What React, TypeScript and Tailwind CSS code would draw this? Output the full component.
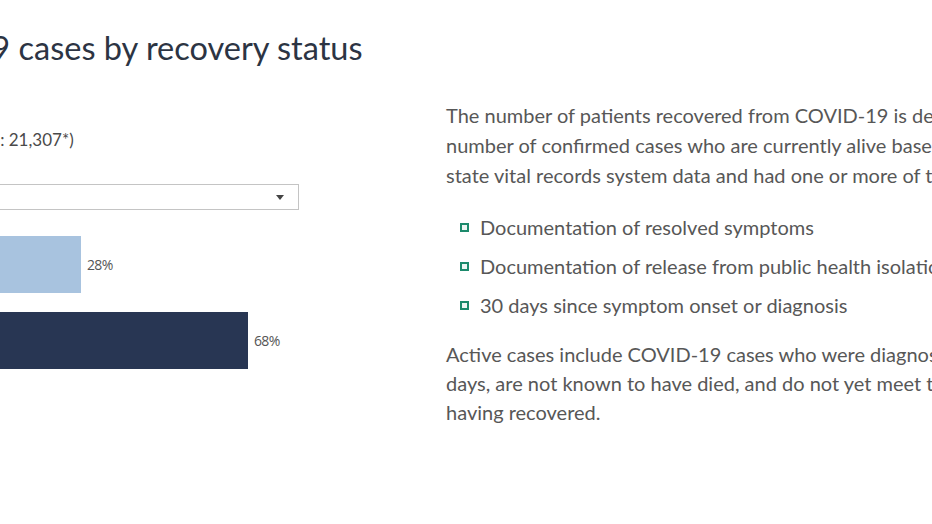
import React from "react";

const bars = [
  { label: "Active", pct: 28, color: "bg-[#a8c3df]" },
  { label: "Recovered", pct: 68, color: "bg-[#283653]" },
];

export default function App() {
  return (
    <div
      className="w-[932px] h-[524px] overflow-hidden bg-white relative"
      style={{ fontFamily: "Lato, 'Open Sans', sans-serif" }}
    >
      <div className="flex">
        {/* Left column: chart */}
        <div className="ml-[-140px] w-[586px] shrink-0">
          <h2 className="mt-[29px] ml-[-2px] text-[32.5px] leading-[38px] text-[#2c3443] font-normal whitespace-nowrap">
            COVID-19 cases by recovery status
          </h2>
          <p className="mt-[63px] ml-[55px] text-[17px] leading-[20px] text-[#4a4a4a] whitespace-nowrap">
            (Total cases: 21,307*)
          </p>
          <div className="mt-[34px] w-[439px] h-[26px] border border-[#c4c4c4] flex items-center justify-end pr-[14px]">
            <svg width="8" height="5" viewBox="0 0 8 5">
              <path d="M0 0 H8 L4 5 Z" fill="#444" />
            </svg>
          </div>
          <div className="ml-[104px] mt-[26px] flex flex-col gap-[19px]">
            {bars.map((b) => (
              <div key={b.label} className="flex items-center h-[57px]">
                <div
                  className={`h-full ${b.color}`}
                  style={{ width: `${b.pct * 4.175}px` }}
                />
                <span
                  className="ml-[6px] text-[14px] text-[#555] tracking-[-0.6px]"
                  style={{ fontFamily: "'Open Sans', sans-serif" }}
                >
                  {b.pct}%
                </span>
              </div>
            ))}
          </div>
        </div>

        {/* Right column: explanation */}
        <div className="shrink-0 text-[20px] leading-[30px] text-[#575757] whitespace-nowrap">
          <div className="mt-[100px]">
            <p>The number of patients recovered from COVID-19 is determined by the</p>
            <p>number of confirmed cases who are currently alive based on</p>
            <p>state vital records system data and had one or more of the following:</p>
          </div>
          <ul className="mt-[22px] ml-[14px] flex flex-col gap-[9px]">
            {[
              "Documentation of resolved symptoms",
              "Documentation of release from public health isolation",
              "30 days since symptom onset or diagnosis",
            ].map((t) => (
              <li key={t} className="flex items-center">
                <span className="w-[9px] h-[9px] border-2 border-[#1d8a6c] bg-[#eef6f3] mr-[11px] shrink-0" />
                <span>{t}</span>
              </li>
            ))}
          </ul>
          <div className="mt-[20px] leading-[29px]">
            <p>Active cases include COVID-19 cases who were diagnosed in the last 30</p>
            <p>days, are not known to have died, and do not yet meet the criteria for</p>
            <p>having recovered.</p>
          </div>
        </div>
      </div>
    </div>
  );
}
